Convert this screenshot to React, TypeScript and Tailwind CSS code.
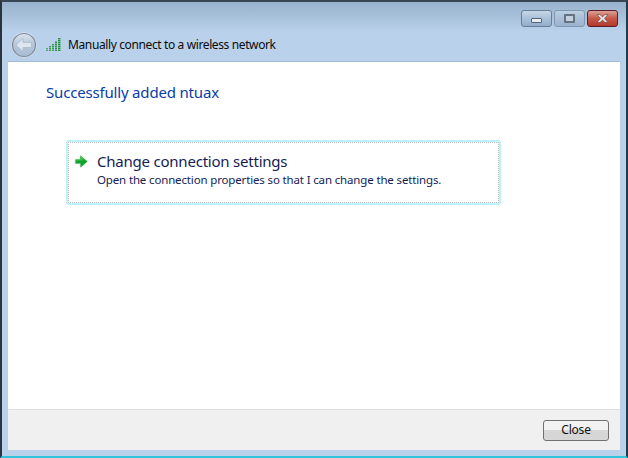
const font = { fontFamily: '"Noto Sans", sans-serif' }

function BackButton() {
  return (
    <svg width="26" height="26" viewBox="0 0 26 26" className="shrink-0">
      <defs>
        <linearGradient id="backFill" x1="0" y1="0" x2="0" y2="1">
          <stop offset="0" stopColor="#d9e3ee" />
          <stop offset="0.5" stopColor="#b4c5d8" />
          <stop offset="1" stopColor="#a9bdd2" />
        </linearGradient>
      </defs>
      <circle cx="13" cy="13" r="12.5" fill="#e6edf5" />
      <circle cx="13" cy="13" r="11.5" fill="url(#backFill)" stroke="#7d8897" strokeWidth="1.2" />
      <path d="M5 13l7-6.5v4h8.5v5H12v4z" fill="#dde5ee" stroke="#a2b2c4" strokeWidth="0.6" strokeLinejoin="round" />
    </svg>
  )
}

function SignalIcon() {
  return (
    <svg width="15" height="14" viewBox="0 0 15 14" className="shrink-0">
      <rect x="0" y="10" width="2" height="3" fill="#5aa86c" />
      <rect x="3" y="8" width="2" height="5" fill="#3f9a55" />
      <rect x="6" y="6" width="2" height="7" fill="#3f9a55" />
      <rect x="9" y="3" width="2" height="10" fill="#2f9148" />
      <rect x="12" y="0" width="2.5" height="13" fill="#2f9148" />
      <path d="M0 11.5h15M0 9.5h15M0 7.5h15M0 5.5h15M0 3.5h15M0 1.5h15" stroke="#b9d1ea" strokeWidth="0.5" />
    </svg>
  )
}

function GreenArrow() {
  return (
    <svg width="15" height="15" viewBox="0 0 15 15" className="shrink-0 mt-[2px]">
      <path d="M1.5 5.5h5V1.5L13.5 7.5l-7 6v-4h-5z" fill="#d8d8d8" transform="translate(-0.8 0.6)" />
      <path d="M1.5 5.5h5V1.5L13.5 7.5l-7 6v-4h-5z" fill="#12a52c" />
      <path d="M1.5 5.5h5V1.5L10 4.5 8 6.5H1.5z" fill="#3fc24f" />
    </svg>
  )
}

function CloseGlyph() {
  return (
    <svg width="15" height="11" viewBox="0 0 15 11">
      <path d="M2 1.5h3l2.5 2.4L10 1.5h3L9.5 5.5l3.5 4h-3L7.5 7.1 5 9.5H2l3.5-4z" fill="#e6e6e6" stroke="#5a3a3a" strokeWidth="0.6" />
    </svg>
  )
}

export default function App() {
  return (
    <div
      className="w-[628px] h-[458px] flex flex-col overflow-hidden bg-[#b9d1ea] border-t-2 border-t-[#3a4654] border-l-2 border-l-[#2a3440] border-r-2 border-r-[#1f3a4a] border-b-2 border-b-[#2fc4dc]"
      style={font}
    >
      {/* title bar */}
      <div className="h-[59px] shrink-0 flex flex-col bg-gradient-to-b from-[#98b2cd] to-[#b9d1ea] to-50%">
        <div className="flex justify-end pt-[8px] pr-[8px] gap-[2px]">
          <div className="w-[31px] h-[17px] rounded-[3px] border border-[#6a7d96] bg-gradient-to-b from-[#c6d6e7] via-[#a9c0d9] to-[#93aecb] flex items-center justify-center">
            <div className="w-[11px] h-[5px] mt-[4px] bg-[#e8edf3] border border-[#56626f] rounded-[1px]" />
          </div>
          <div className="w-[31px] h-[17px] rounded-[3px] border border-[#8398b0] bg-gradient-to-b from-[#bccfe3] via-[#a9bfd8] to-[#9ab3ce] flex items-center justify-center">
            <div className="w-[11px] h-[9px] border-2 border-[#66727f] bg-[#c2d0df] rounded-[1px]" />
          </div>
          <div className="w-[31px] h-[17px] rounded-[3px] border border-[#5c1d2a] bg-gradient-to-b from-[#dca094] via-[#c6584a] to-[#b5382c] flex items-center justify-center">
            <CloseGlyph />
          </div>
        </div>
        <div className="flex items-center pl-[9px] mt-[5px]">
          <BackButton />
          <div className="ml-[9px]">
            <SignalIcon />
          </div>
          <span className="ml-[7px] text-[12px] leading-none text-[#0b0b0b] tracking-[-0.38px]">
            Manually connect to a wireless network
          </span>
        </div>
      </div>

      {/* page */}
      <div className="mx-[6px] flex-1 flex flex-col border-t border-t-[#a3bdd8]">
        <div className="flex-1 bg-white pl-[38px] pt-[20px]">
          <h1 className="text-[15px] leading-5 text-[#0a3da6] tracking-[-0.18px]">Successfully added ntuax</h1>
          <div className="mt-[38px] ml-[20px] w-[435px] h-[65px] rounded-[3px] border-2 border-[#bdf1fc]">
            <div className="h-full border border-dotted border-[#bcbcbc] flex pl-[5px] pt-[9px]">
              <GreenArrow />
              <div className="ml-[8px]">
                <div className="text-[15px] leading-[19px] text-[#151c55] tracking-[-0.22px]">Change connection settings</div>
                <div className="text-[11.5px] leading-[17px] text-[#151c55] tracking-[-0.15px]">
                  Open the connection properties so that I can change the settings.
                </div>
              </div>
            </div>
          </div>
        </div>
        <div className="h-[41px] shrink-0 bg-[#f0f0f0] border-t border-t-[#dfdfdf] flex justify-end items-center pr-[11px]">
          <button className="w-[66px] h-[21px] rounded-[3px] border border-[#707070] bg-gradient-to-b from-[#f2f2f2] from-50% to-[#d6d6d6] to-50% text-[12px] leading-none text-[#111] tracking-[-0.2px]" style={font}>
            Close
          </button>
        </div>
      </div>
      <div className="h-[6px] shrink-0" />
    </div>
  )
}
